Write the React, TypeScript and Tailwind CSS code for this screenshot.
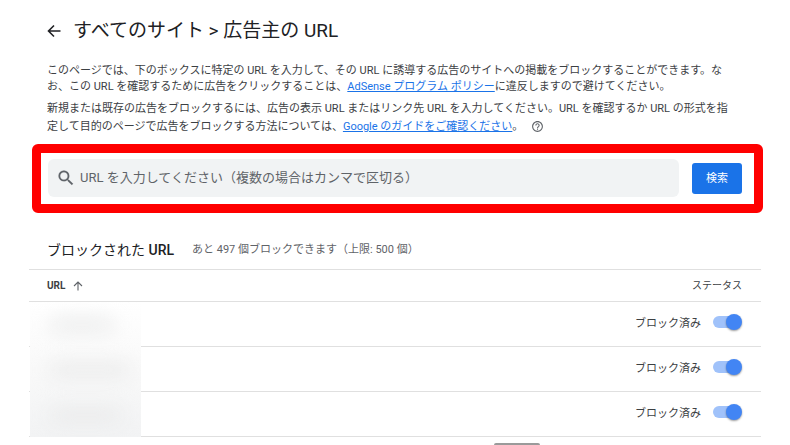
import React from "react";

const rows = [
  { id: "row-1", smudge: "w-16" },
  { id: "row-2", smudge: "w-20" },
  { id: "row-3", smudge: "w-[72px]" },
];

function ArrowLeft() {
  return (
    <svg width="14" height="14" viewBox="0 0 14 14" fill="none" stroke="currentColor" strokeWidth="1.6" aria-hidden="true">
      <path d="M13.500 7H2M7 1.500L1.500 7L7 12.500" />
    </svg>
  );
}

function ArrowUp() {
  return (
    <svg width="10" height="10" viewBox="0 0 10 10" fill="none" stroke="#5f6368" strokeWidth="1.1" aria-hidden="true">
      <path d="M5 9.5V1M1 5L5 1L9 5" />
    </svg>
  );
}

function SearchIcon() {
  return (
    <svg width="20" height="20" viewBox="0 0 24 24" fill="currentColor" stroke="currentColor" strokeWidth="0.2" aria-hidden="true">
      <path d="M15.5 14h-.79l-.28-.27A6.471 6.471 0 0 0 16 9.5 6.5 6.5 0 1 0 9.5 16c1.61 0 3.09-.59 4.23-1.57l.27.28v.79l5 4.99L20.49 19l-4.99-5zm-6 0C7.01 14 5 11.99 5 9.5S7.01 5 9.5 5 14 7.01 14 9.5 11.99 14 9.5 14z" />
    </svg>
  );
}

function HelpIcon() {
  return (
    <svg width="13" height="13" viewBox="0 0 24 24" fill="currentColor" aria-hidden="true">
      <path d="M11 18h2v-2h-2v2zm1-16C6.48 2 2 6.48 2 12s4.48 10 10 10 10-4.48 10-10S17.52 2 12 2zm0 18c-4.41 0-8-3.59-8-8s3.59-8 8-8 8 3.59 8 8-3.59 8-8 8zm0-14c-2.21 0-4 1.79-4 4h2c0-1.1.9-2 2-2s2 .9 2 2c0 2-3 1.75-3 5h2c0-2.25 3-2.5 3-5 0-2.21-1.79-4-4-4z" />
    </svg>
  );
}

function Toggle({ id }: { id: string }) {
  return (
    <span className="relative inline-flex h-4 w-[29px] items-center">
      <input id={id} type="checkbox" role="switch" defaultChecked className="peer absolute inset-0 z-10 cursor-pointer opacity-0" />
      <span className="h-3 w-6 rounded-full bg-gray-300 peer-checked:bg-[#a0c2fa]" />
      <span className="absolute left-0 size-4 rounded-full bg-white shadow-[0_1px_2px_rgba(0,0,0,0.4)] peer-checked:right-0 peer-checked:left-auto peer-checked:bg-[#4285f4]" />
    </span>
  );
}

export default function App() {
  return (
    <main className="h-screen overflow-hidden bg-white pr-[27px] pl-[29px] font-[Roboto,'Noto_Sans_CJK_JP',sans-serif] text-[11px] text-[#3c4043]">
      <header className="flex items-center gap-3 px-[18px] pt-4 text-[#202124]">
        <button type="button" aria-label="戻る" className="shrink-0">
          <ArrowLeft />
        </button>
        <h1 className="text-[19px] leading-[30px]">すべてのサイト &gt; 広告主の URL</h1>
      </header>

      <section className="px-[18px] pt-[17px] leading-4">
        <p>
          このページでは、下のボックスに特定の URL を入力して、その URL に誘導する広告のサイトへの掲載をブロックすることができます。な<br />
          お、この URL を確認するために広告をクリックすることは、
          <a href="#policy" className="text-[#1a73e8] underline">AdSense プログラム ポリシー</a>
          に違反しますので避けてください。
        </p>
        <p className="mt-[5px] leading-[18px]">
          新規または既存の広告をブロックするには、広告の表示 URL またはリンク先 URL を入力してください。URL を確認するか URL の形式を指<br />
          定して目的のページで広告をブロックする方法については、
          <a href="#guide" className="text-[#1a73e8] underline">Google のガイドをご確認ください</a>。
          <button type="button" aria-label="ヘルプ" className="ml-2 align-text-top text-[#5f6368]">
            <HelpIcon />
          </button>
        </p>
      </section>

      <form
        className="mt-2 ml-[3px] flex items-center gap-[13px] rounded-md border-[9px] border-[#ff0000] pt-[6px] pr-3 pb-[7px] pl-[7px]"
        onSubmit={(e) => e.preventDefault()}
      >
        <label className="flex h-[38px] flex-1 items-center gap-1 rounded-md bg-[#f1f3f4] pl-2 text-[#5f6368]">
          <SearchIcon />
          <input
            type="text"
            aria-label="URL"
            placeholder="URL を入力してください（複数の場合はカンマで区切る）"
            className="min-w-0 flex-1 bg-transparent text-[13px] outline-none placeholder:text-[#5f6368]"
          />
        </label>
        <button type="submit" className="h-[31px] w-[50px] rounded-[3px] bg-[#1a73e8] pt-[2px] text-[11px] text-white">
          検索
        </button>
      </form>

      <div className="mt-5 mr-[2px] flex h-[34px] items-center gap-[18px] px-[18px]">
        <h2 className="text-sm text-[#202124]">
          ブロックされた <span className="font-medium">URL</span>
        </h2>
        <p className="text-[#5f6368]">あと 497 個ブロックできます（上限: 500 個）</p>
      </div>

      <div className="relative mt-[2px] mr-[2px]">
        <table className="w-full border-separate border-spacing-0">
          <thead>
            <tr className="h-[33px] text-[10px]">
              <th scope="col" aria-sort="ascending" className="border-y border-[#e0e0e0] pl-[18px] text-left font-bold">
                <span className="flex items-center gap-2">
                  URL <ArrowUp />
                </span>
              </th>
              <th scope="col" className="border-y border-[#e0e0e0] pr-[19px] text-right font-normal">ステータス</th>
            </tr>
          </thead>
          <tbody>
            {rows.map((row) => (
              <tr key={row.id} className="h-[45px]">
                <td className="border-b border-[#e0e0e0]" />
                <td className="border-b border-[#e0e0e0] pr-[19px] pb-1">
                  <span className="flex items-center justify-end gap-3">
                    <label htmlFor={row.id} className="pt-1">ブロック済み</label>
                    <Toggle id={row.id} />
                  </span>
                </td>
              </tr>
            ))}
          </tbody>
        </table>
        <div className="absolute bottom-0 left-px flex h-[135px] w-[111px] flex-col justify-around overflow-hidden bg-linear-to-b from-white via-[#f9f9f9] to-[#f2f3f4]" aria-hidden="true">
          {rows.map((row) => (
            <span key={row.id} className={`ml-5 h-3 rounded-full bg-[#e7e8e8] blur-[10px] ${row.smudge}`} />
          ))}
        </div>
      </div>

      <div className="mt-[6px] ml-[465px] h-3 w-[46px] rounded-xs bg-[#9a9a9a]" aria-hidden="true" />
    </main>
  );
}
